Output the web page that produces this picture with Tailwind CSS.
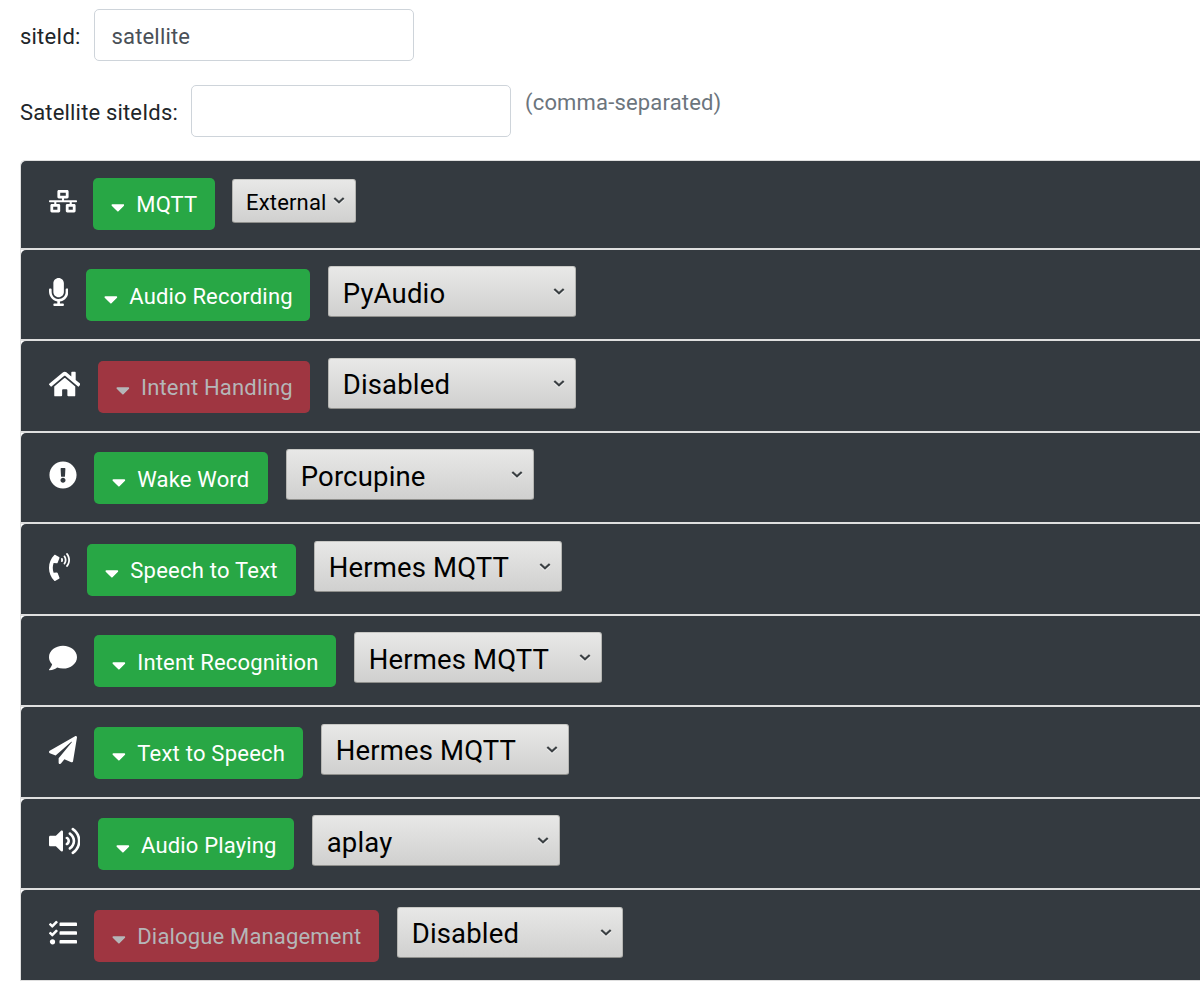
<!DOCTYPE html>
<html lang="en">
<head>
<meta charset="utf-8">
<title>Settings</title>
<script src="https://cdn.jsdelivr.net/npm/@tailwindcss/browser@4"></script>
</head>
<body class="h-[996px] overflow-hidden bg-white font-['Roboto',sans-serif] text-[22px] leading-[33px] tracking-[0.17px] text-[#212529]">
<svg class="hidden">
  <symbol id="caret" viewBox="0 0 320 512"><path d="M31.3 192h257.3c17.8 0 26.7 21.5 14.1 34.1L174.1 354.8c-7.8 7.8-20.5 7.8-28.3 0L17.2 226.1C4.6 213.5 13.5 192 31.3 192z"/></symbol>
  <symbol id="chevron" viewBox="0 0 12 8"><path d="M1.3 2.2L6 6.500l4.700-4.300" fill="none" stroke="#fff" stroke-opacity=".7" stroke-width="2"/><path d="M1.300 1L6 5.200l4.700-4.200" fill="none" stroke="#3b4043" stroke-width="2.200"/></symbol>
</svg>
<form class="pt-[9px]">
  <div class="ml-[20px] flex items-center">
    <label class="w-[74px] pt-[2px] whitespace-nowrap">siteId:</label>
    <div class="flex h-[52px] w-[320px] items-center rounded-[5px] border border-[#ced4da] px-[16.500px] pt-[2px] text-[#495057]">satellite</div>
  </div>
  <div class="mt-[24px] ml-[20px] flex items-center">
    <label class="w-[171px] pt-[2px] whitespace-nowrap">Satellite siteIds:</label>
    <div class="h-[52px] w-[320px] rounded-[5px] border border-[#ced4da]"></div>
    <span class="mb-[17px] ml-[14px] whitespace-nowrap text-[#6c757d]">(comma-separated)</span>
  </div>

  <main class="mt-[23px] ml-[20px] flex flex-col rounded-tl-[5px] border-t border-l border-[#dfdfdf] whitespace-nowrap">
    <section class="flex h-[89px] items-start rounded-tl-[5px] border-b-2 border-[#dfdfdf] bg-[#343a40] pl-[27.500px]">
      <svg class="mt-[29px] h-[22.500px] w-[28px] fill-white" viewBox="0 0 640 512"><path d="M640 264v-16c0-8.840-7.160-16-16-16H344v-40h72c17.670 0 32-14.330 32-32V32c0-17.670-14.330-32-32-32H224c-17.670 0-32 14.330-32 32v128c0 17.670 14.330 32 32 32h72v40H16c-8.840 0-16 7.160-16 16v16c0 8.840 7.160 16 16 16h104v40H64c-17.670 0-32 14.330-32 32v128c0 17.670 14.330 32 32 32h160c17.670 0 32-14.330 32-32V352c0-17.670-14.330-32-32-32h-56v-40h304v40h-56c-17.670 0-32 14.330-32 32v128c0 17.670 14.330 32 32 32h160c17.670 0 32-14.330 32-32V352c0-17.670-14.330-32-32-32h-56v-40h104c8.840 0 16-7.160 16-16zM256 128V64h128v64H256zm-64 320H96v-64h96v64zm352 0h-96v-64h96v64z"/></svg>
      <div class="mt-[17px] ml-[16.500px] flex h-[52px] w-[122px] items-center rounded-[5px] bg-[#28a745] pl-[17.500px] text-white"><svg class="mt-[6px] mr-[12px] h-[22px] w-[13.750px] fill-current"><use href="#caret"/></svg>MQTT</div>
      <div class="mt-[18px] ml-[17px] flex h-[44px] w-[124px] items-center justify-between rounded-[3px] border border-[#b5b5b2] border-t-[#c8c8c5] border-b-[#8f8f8c] bg-linear-to-b from-[#e8e8e7] to-[#d0d0cf] pr-[10px] pl-[13px] text-black"><span class="pt-[2px]">External</span><svg class="h-[8px] w-[12px]"><use href="#chevron"/></svg></div>
    </section>
    <section class="flex h-[91px] items-start rounded-tl-[5px] border-b-2 border-[#dfdfdf] bg-[#343a40] pl-[27.500px]">
      <svg class="mt-[28px] h-[28px] w-[19.250px] fill-white" viewBox="0 0 352 512"><path d="M176 352c53.020 0 96-42.980 96-96V96c0-53.020-42.980-96-96-96S80 42.980 80 96v160c0 53.020 42.980 96 96 96zm160-160h-16c-8.840 0-16 7.160-16 16v48c0 74.800-64.490 134.820-140.790 127.380C96.710 376.890 48 317.110 48 250.300V208c0-8.840-7.160-16-16-16H16c-8.840 0-16 7.160-16 16v40.160c0 89.640 63.970 169.550 152 181.690V464H96c-8.840 0-16 7.160-16 16v16c0 8.840 7.160 16 16 16h160c8.840 0 16-7.160 16-16v-16c0-8.840-7.160-16-16-16h-56v-33.770C285.710 418.470 352 344.900 352 256v-48c0-8.840-7.160-16-16-16z"/></svg>
      <div class="mt-[19px] ml-[18.250px] flex h-[52px] w-[224px] items-center rounded-[5px] bg-[#28a745] pt-[2px] pl-[18px] text-white"><svg class="mt-[5px] mr-[11.500px] h-[22px] w-[13.750px] fill-current"><use href="#caret"/></svg>Audio Recording</div>
      <div class="mt-[16px] ml-[18px] flex h-[51px] w-[248px] items-center justify-between rounded-[3px] border border-[#b5b5b2] border-t-[#c8c8c5] border-b-[#8f8f8c] bg-linear-to-b from-[#e8e8e7] to-[#d0d0cf] pr-[10px] pl-[13.700px] text-[27.500px] text-black"><span class="pt-[3px]">PyAudio</span><svg class="h-[8px] w-[12px]"><use href="#chevron"/></svg></div>
    </section>
    <section class="flex h-[92px] items-start rounded-tl-[5px] border-b-2 border-[#dfdfdf] bg-[#343a40] pl-[27.500px]">
      <svg class="mt-[28.500px] h-[28px] w-[31.500px] fill-white" viewBox="0 0 576 512"><path d="M280.370 148.260L96 300.110V464a16 16 0 0 0 16 16l112.060-.29a16 16 0 0 0 15.920-16V368a16 16 0 0 1 16-16h64a16 16 0 0 1 16 16v95.640a16 16 0 0 0 16 16.050L464 480a16 16 0 0 0 16-16V300L295.670 148.260a12.190 12.190 0 0 0-15.300 0zM571.600 251.470L488 182.560V44.050a12 12 0 0 0-12-12h-56a12 12 0 0 0-12 12v72.610L318.470 43a48 48 0 0 0-61 0L4.340 251.470a12 12 0 0 0-1.600 16.900l25.500 31A12 12 0 0 0 45.150 301l235.220-193.740a12.190 12.190 0 0 1 15.300 0L530.900 301a12 12 0 0 0 16.900-1.600l25.500-31a12 12 0 0 0-1.700-16.930z"/></svg>
      <div class="mt-[20px] ml-[18px] flex h-[52px] w-[212px] items-center rounded-[5px] bg-[#9f3641] pl-[18px] text-[#b5b6b8]"><svg class="mt-[6px] mr-[11.250px] h-[22px] w-[13.750px] fill-current"><use href="#caret"/></svg>Intent Handling</div>
      <div class="mt-[17px] ml-[18px] flex h-[51px] w-[248px] items-center justify-between rounded-[3px] border border-[#b5b5b2] border-t-[#c8c8c5] border-b-[#8f8f8c] bg-linear-to-b from-[#e8e8e7] to-[#d0d0cf] pr-[10px] pl-[13.700px] text-[27.500px] text-black"><span class="pt-[2px]">Disabled</span><svg class="h-[8px] w-[12px]"><use href="#chevron"/></svg></div>
    </section>
    <section class="flex h-[91px] items-start rounded-tl-[5px] border-b-2 border-[#dfdfdf] bg-[#343a40] pl-[27.500px]">
      <svg class="mt-[28px] h-[28px] w-[28px] fill-white" viewBox="0 0 512 512"><path d="M504 256c0 136.997-111.043 248-248 248S8 392.997 8 256C8 119.083 119.043 8 256 8s248 111.083 248 248zm-248 50c-25.405 0-46 20.595-46 46s20.595 46 46 46 46-20.595 46-46-20.595-46-46-46zm-43.673-165.346l7.418 136c.347 6.364 5.609 11.346 11.982 11.346h48.546c6.373 0 11.635-4.982 11.982-11.346l7.418-136c.375-6.874-5.098-12.654-11.982-12.654h-63.383c-6.884 0-12.356 5.780-11.981 12.654z"/></svg>
      <div class="mt-[19px] ml-[17.500px] flex h-[52px] w-[174px] items-center rounded-[5px] bg-[#28a745] pt-[2px] pl-[18px] text-white"><svg class="mt-[5px] mr-[11.500px] h-[22px] w-[13.750px] fill-current"><use href="#caret"/></svg>Wake Word</div>
      <div class="mt-[16px] ml-[18px] flex h-[51px] w-[248px] items-center justify-between rounded-[3px] border border-[#b5b5b2] border-t-[#c8c8c5] border-b-[#8f8f8c] bg-linear-to-b from-[#e8e8e7] to-[#d0d0cf] pr-[10px] pl-[13.700px] text-[27.500px] text-black"><span class="pt-[3px]">Porcupine</span><svg class="h-[8px] w-[12px]"><use href="#chevron"/></svg></div>
    </section>
    <section class="flex h-[92px] items-start rounded-tl-[5px] border-b-2 border-[#dfdfdf] bg-[#343a40] pl-[27.500px]">
      <svg class="mt-[28.500px] h-[28px] w-[21px] fill-white" viewBox="0 0 384 512"><path d="M97.333 506.966c-129.874-129.874-129.681-340.252 0-469.933 5.698-5.698 14.527-6.632 21.263-2.422l64.817 40.513a17.187 17.187 0 0 1 6.849 20.958l-32.408 81.021a17.188 17.188 0 0 1-17.669 10.719l-55.810-5.580c-21.051 58.261-20.612 122.471 0 179.515l55.811-5.581a17.188 17.188 0 0 1 17.669 10.719l32.408 81.022a17.188 17.188 0 0 1-6.849 20.958l-64.817 40.513a17.190 17.190 0 0 1-21.264-2.422zM247.126 95.473c11.832 20.047 11.832 45.008 0 65.055-3.950 6.693-13.108 7.959-18.718 2.581l-5.975-5.726c-3.911-3.748-4.793-9.622-2.261-14.410a32.063 32.063 0 0 0 0-29.945c-2.533-4.788-1.650-10.662 2.261-14.410l5.975-5.726c5.610-5.378 14.768-4.112 18.718 2.581zm91.787-91.187c60.140 71.604 60.092 175.882 0 247.428-4.474 5.327-12.530 5.746-17.552.933l-5.798-5.557c-4.560-4.371-4.977-11.529-.93-16.379 49.687-59.538 49.646-145.933 0-205.422-4.047-4.850-3.631-12.008.93-16.379l5.798-5.557c5.022-4.813 13.078-4.394 17.552.933zm-45.972 44.941c36.050 46.322 36.108 111.149 0 157.546-4.390 5.641-12.697 6.251-17.856 1.304l-5.818-5.579c-4.400-4.219-4.998-11.095-1.285-15.931 26.536-34.564 26.534-82.572 0-117.134-3.713-4.836-3.115-11.711 1.285-15.931l5.818-5.579c5.159-4.947 13.466-4.337 17.856 1.304z"/></svg>
      <div class="mt-[20px] ml-[17.500px] flex h-[52px] w-[209px] items-center rounded-[5px] bg-[#28a745] pl-[18px] tracking-[0.23px] text-white"><svg class="mt-[6px] mr-[11.500px] h-[22px] w-[13.750px] fill-current"><use href="#caret"/></svg>Speech to Text</div>
      <div class="mt-[17px] ml-[18px] flex h-[51px] w-[248px] items-center justify-between rounded-[3px] border border-[#b5b5b2] border-t-[#c8c8c5] border-b-[#8f8f8c] bg-linear-to-b from-[#e8e8e7] to-[#d0d0cf] pr-[10px] pl-[13.700px] text-[27.500px] text-black"><span class="pt-[2px]">Hermes MQTT</span><svg class="h-[8px] w-[12px]"><use href="#chevron"/></svg></div>
    </section>
    <section class="flex h-[91px] items-start rounded-tl-[5px] border-b-2 border-[#dfdfdf] bg-[#343a40] pl-[27.500px]">
      <svg class="mt-[28px] h-[28px] w-[28px] fill-white" viewBox="0 0 512 512"><path d="M256 32C114.600 32 0 125.100 0 240c0 49.600 21.400 95 57 130.700C44.500 421.100 2.700 466 2.200 466.500c-2.200 2.300-2.800 5.700-1.500 8.700S4.800 480 8 480c66.300 0 116-31.800 140.600-51.400 32.700 12.300 69 19.400 107.400 19.400 141.400 0 256-93.100 256-208S397.400 32 256 32z"/></svg>
      <div class="mt-[19px] ml-[17.500px] flex h-[52px] w-[242px] items-center rounded-[5px] bg-[#28a745] pt-[2px] pl-[18px] text-white"><svg class="mt-[5px] mr-[11.500px] h-[22px] w-[13.750px] fill-current"><use href="#caret"/></svg>Intent Recognition</div>
      <div class="mt-[16px] ml-[18px] flex h-[51px] w-[248px] items-center justify-between rounded-[3px] border border-[#b5b5b2] border-t-[#c8c8c5] border-b-[#8f8f8c] bg-linear-to-b from-[#e8e8e7] to-[#d0d0cf] pr-[10px] pl-[13.700px] text-[27.500px] text-black"><span class="pt-[3px]">Hermes MQTT</span><svg class="h-[8px] w-[12px]"><use href="#chevron"/></svg></div>
    </section>
    <section class="flex h-[92px] items-start rounded-tl-[5px] border-b-2 border-[#dfdfdf] bg-[#343a40] pl-[27.500px]">
      <svg class="mt-[28.500px] h-[28px] w-[28px] fill-white" viewBox="0 0 512 512"><path d="M476 3.200L12.500 270.600c-18.100 10.400-15.800 35.600 2.200 43.200L121 358.400l287.300-253.200c5.500-4.900 13.300 2.600 8.600 8.300L176 407v80.500c0 23.600 28.500 32.900 42.500 15.800L282 426l124.600 52.200c14.200 6 30.400-2.900 33-18.200l72-432C515 7.800 493.300-6.800 476 3.200z"/></svg>
      <div class="mt-[20px] ml-[17.500px] flex h-[52px] w-[209px] items-center rounded-[5px] bg-[#28a745] pl-[18px] tracking-[0.23px] text-white"><svg class="mt-[6px] mr-[11.500px] h-[22px] w-[13.750px] fill-current"><use href="#caret"/></svg>Text to Speech</div>
      <div class="mt-[17px] ml-[18px] flex h-[51px] w-[248px] items-center justify-between rounded-[3px] border border-[#b5b5b2] border-t-[#c8c8c5] border-b-[#8f8f8c] bg-linear-to-b from-[#e8e8e7] to-[#d0d0cf] pr-[10px] pl-[13.700px] text-[27.500px] text-black"><span class="pt-[2px]">Hermes MQTT</span><svg class="h-[8px] w-[12px]"><use href="#chevron"/></svg></div>
    </section>
    <section class="flex h-[91px] items-start rounded-tl-[5px] border-b-2 border-[#dfdfdf] bg-[#343a40] pl-[27.500px]">
      <svg class="mt-[28px] h-[28px] w-[31.500px] fill-white" viewBox="0 0 576 512"><path d="M215.030 71.050L126.060 160H24c-13.260 0-24 10.740-24 24v144c0 13.250 10.740 24 24 24h102.060l88.970 88.950c15.030 15.030 40.970 4.470 40.970-16.970V88.020c0-21.460-25.960-31.980-40.970-16.970zm233.320-51.080c-11.170-7.330-26.180-4.240-33.510 6.950-7.340 11.170-4.220 26.180 6.950 33.510 66.270 43.490 105.820 116.600 105.820 195.580 0 78.980-39.550 152.090-105.820 195.580-11.170 7.320-14.290 22.340-6.950 33.500 7.040 10.710 21.930 14.560 33.510 6.950C528.270 439.580 576 351.330 576 256S528.270 72.430 448.350 19.970zM480 256c0-63.530-32.060-121.940-85.770-156.240-11.190-7.140-26.030-3.820-33.120 7.460s-3.780 26.210 7.410 33.360C408.270 165.970 432 209.110 432 256s-23.730 90.020-63.480 115.420c-11.190 7.140-14.500 22.070-7.410 33.360 6.510 10.360 21.120 15.140 33.120 7.460C447.940 377.940 480 319.540 480 256zm-141.770-76.870c-11.580-6.330-26.190-2.160-32.610 9.450-6.390 11.610-2.160 26.200 9.450 32.610C327.980 228.280 336 241.630 336 256c0 14.380-8.020 27.720-20.920 34.810-11.610 6.410-15.840 21-9.450 32.610 6.430 11.660 21.050 15.800 32.610 9.450 28.230-15.550 45.770-45 45.770-76.880s-17.540-61.320-45.780-76.860z"/></svg>
      <div class="mt-[19px] ml-[18px] flex h-[52px] w-[196px] items-center rounded-[5px] bg-[#28a745] pt-[2px] pl-[18px] text-white"><svg class="mt-[5px] mr-[11.250px] h-[22px] w-[13.750px] fill-current"><use href="#caret"/></svg>Audio Playing</div>
      <div class="mt-[16px] ml-[18px] flex h-[51px] w-[248px] items-center justify-between rounded-[3px] border border-[#b5b5b2] border-t-[#c8c8c5] border-b-[#8f8f8c] bg-linear-to-b from-[#e8e8e7] to-[#d0d0cf] pr-[10px] pl-[13.700px] text-[27.500px] text-black"><span class="pt-[3px]">aplay</span><svg class="h-[8px] w-[12px]"><use href="#chevron"/></svg></div>
    </section>
    <section class="flex h-[91px] items-start rounded-tl-[5px] border-b border-[#dfdfdf] bg-[#343a40] pl-[27.500px]">
      <svg class="mt-[28.500px] h-[28px] w-[28px] fill-white" viewBox="0 0 512 512"><path d="M139.610 35.500a12 12 0 0 0-17 0L58.930 98.810l-22.700-22.120a12 12 0 0 0-17 0L3.530 92.410a12 12 0 0 0 0 17l47.590 47.400a12.780 12.780 0 0 0 17.610 0l15.590-15.620L156.520 69a12.090 12.090 0 0 0 .09-17zm0 159.190a12 12 0 0 0-17 0l-63.680 63.720-22.700-22.100a12 12 0 0 0-17 0L3.530 252a12 12 0 0 0 0 17L51 316.500a12.770 12.770 0 0 0 17.600 0l15.700-15.690 72.200-72.220a12 12 0 0 0 .09-16.900zM64 368c-26.490 0-48.590 21.500-48.590 48S37.530 464 64 464a48 48 0 0 0 0-96zm432 16H208a16 16 0 0 0-16 16v32a16 16 0 0 0 16 16h288a16 16 0 0 0 16-16v-32a16 16 0 0 0-16-16zm0-320H208a16 16 0 0 0-16 16v32a16 16 0 0 0 16 16h288a16 16 0 0 0 16-16V80a16 16 0 0 0-16-16zm0 160H208a16 16 0 0 0-16 16v32a16 16 0 0 0 16 16h288a16 16 0 0 0 16-16v-32a16 16 0 0 0-16-16z"/></svg>
      <div class="mt-[20px] ml-[17.500px] flex h-[52px] w-[285px] items-center rounded-[5px] bg-[#9f3641] pl-[18px] text-[#b5b6b8]"><svg class="mt-[6px] mr-[11.500px] h-[22px] w-[13.750px] fill-current"><use href="#caret"/></svg>Dialogue Management</div>
      <div class="mt-[17px] ml-[18px] flex h-[51px] w-[226px] items-center justify-between rounded-[3px] border border-[#b5b5b2] border-t-[#c8c8c5] border-b-[#8f8f8c] bg-linear-to-b from-[#e8e8e7] to-[#d0d0cf] pr-[10px] pl-[13.700px] text-[27.500px] text-black"><span class="pt-[2px]">Disabled</span><svg class="h-[8px] w-[12px]"><use href="#chevron"/></svg></div>
    </section>
  </main>
</form>
</body>
</html>
